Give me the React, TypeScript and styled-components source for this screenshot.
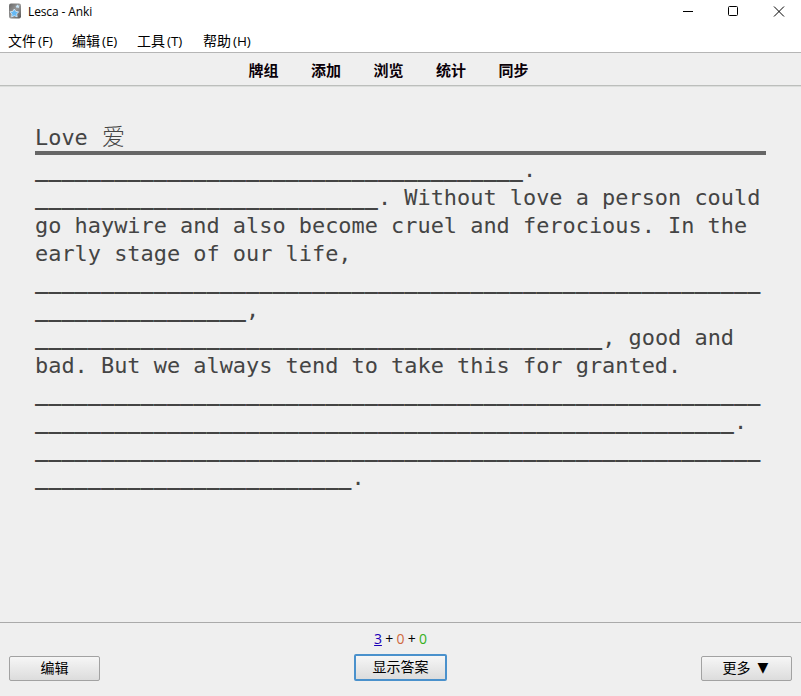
import React from 'react';
import styled, { createGlobalStyle } from 'styled-components';

const GlobalStyle = createGlobalStyle`
  html, body { margin: 0; padding: 0; overflow: hidden; background: #efefef; }
  *, *::before, *::after { box-sizing: border-box; }
`;

const Window = styled.div`
  width: 801px;
  height: 696px;
  display: flex;
  flex-direction: column;
  background: #efefef;
  color: #000;
  font-family: "Open Sans", "Noto Sans CJK SC", sans-serif;
  white-space: nowrap;
`;

const TitleBar = styled.header`
  height: 28px;
  flex: none;
  display: flex;
  background: #fff;
`;

const AppIcon = styled.svg`
  width: 14px;
  height: 16px;
  margin: 3px 0 0 8px;
`;

const Title = styled.span`
  margin-left: 6px;
  font-size: 12px;
  line-height: 24px;
  letter-spacing: -0.12px;
`;

const WindowControls = styled.svg`
  width: 120px;
  height: 22px;
  margin-left: auto;
`;

const MenuBar = styled.nav`
  height: 24px;
  flex: none;
  display: flex;
  padding-left: 8px;
  background: #fff;
`;

const MenuItem = styled.span<{ $width: number }>`
  width: ${(p) => p.$width}px;
  display: flex;
  gap: 2px;
  font-size: 14px;
  line-height: 26px;
`;

const Mnemonic = styled.span`
  font-size: 13.5px;
  letter-spacing: -0.1px;
`;

const Toolbar = styled.nav`
  height: 34px;
  flex: none;
  display: flex;
  justify-content: center;
  gap: 32.5px;
  padding-right: 24px;
  border-top: 1px solid #b5b5b5;
  border-bottom: 1px solid #bcbebc;
  box-shadow: 0 1px #dcdedc;
`;

const ToolbarLink = styled.a`
  color: #0a0008;
  font: bold 15px/33px "Noto Sans CJK SC", sans-serif;
`;

const Card = styled.main`
  flex: 1;
  padding: 37px 35px 0;
  color: #444;
  font-family: "DejaVu Sans Mono", "Noto Sans CJK SC", monospace;
  font-size: 21.92px;
  line-height: 28px;
`;

const CardTitle = styled.div`
  height: 32px;
  border-bottom: 4px solid #666;
  line-height: 30px;
  white-space: pre;
`;

const Glyph = styled.span`
  margin-left: 1px;
  font-family: "Noto Sans CJK SC", sans-serif;
  font-size: 23px;
  font-weight: 300;
  line-height: 1;
`;

const Passage = styled.div`
  margin-top: 1px;
`;

const Line = styled.div`
  height: 28px;
  white-space: pre;
`;

const Blank = styled.span`
  text-shadow: 0 -1px #444;
`;

const BottomBar = styled.footer`
  height: 74px;
  flex: none;
  display: grid;
  grid-template-columns: 91px 93px 91px;
  justify-content: space-between;
  padding: 0 9px;
  border-top: 1px solid #aaa;
`;

const Column = styled.div<{ $top: number }>`
  padding-top: ${(p) => p.$top}px;
`;

const Counts = styled.div`
  height: 31px;
  padding-top: 4px;
  text-align: center;
  font: 14px/24px "Open Sans", sans-serif;
  letter-spacing: -0.2px;
`;

const Count = styled.span<{ $color: string; $active?: boolean }>`
  color: ${(p) => p.$color};
  text-decoration: ${(p) => (p.$active ? 'underline' : 'none')};
`;

const Button = styled.button<{ $primary?: boolean }>`
  width: 100%;
  height: ${(p) => (p.$primary ? 27 : 25)}px;
  display: flex;
  justify-content: center;
  align-items: center;
  gap: 7px;
  padding: 0 0 3px;
  border: ${(p) => (p.$primary ? '2px solid #4a91cc' : '1px solid #a2a2a2')};
  border-radius: 2px;
  background: linear-gradient(#f6f6f6, #dcdcdc);
  color: #000;
  font: 14px/20px "Noto Sans CJK SC", sans-serif;
`;

const Arrow = styled.span`
  margin-right: 2px;
  font: 14px/18px "DejaVu Sans", sans-serif;
`;

const menus = [
  { label: '文件', key: '(F)', width: 64 },
  { label: '编辑', key: '(E)', width: 65 },
  { label: '工具', key: '(T)', width: 66 },
  { label: '帮助', key: '(H)', width: 60 },
];

const links = ['牌组', '添加', '浏览', '统计', '同步'];

const lines: { blanks?: number; text?: string }[] = [
  { blanks: 37, text: '.' },
  { blanks: 26, text: '. Without love a person could' },
  { text: 'go haywire and also become cruel and ferocious. In the' },
  { text: 'early stage of our life,' },
  { blanks: 55 },
  { blanks: 16, text: ',' },
  { blanks: 43, text: ', good and' },
  { text: 'bad. But we always tend to take this for granted.' },
  { blanks: 55 },
  { blanks: 53, text: '.' },
  { blanks: 55 },
  { blanks: 24, text: '.' },
];

export default function App() {
  return (
    <>
      <GlobalStyle />
      <Window>
        <TitleBar>
          <AppIcon viewBox="0 0 14 16">
            <defs>
              <linearGradient id="deck" x1="0" y1="0" x2="1" y2="1">
                <stop offset="0" stopColor="#666" />
                <stop offset=".5" stopColor="#999" />
                <stop offset="1" stopColor="#555" />
              </linearGradient>
            </defs>
            <rect x="1" y="0.5" width="12" height="15" rx="2" fill="url(#deck)" />
            <path d="M6.3 6l1.5 2.4 2.9.4-2 2.2.5 2.9-2.9-1.2-2.7 1.2.4-2.9-2-2.2 2.9-.5z" fill="#65b9f4" stroke="#e6f4ff" strokeWidth=".7" />
            <path d="M9.5 1.5l.7 1.1 1.4.1-.9 1.1.3 1.4-1.4-.6-1.2.7.1-1.4-1-1 1.4-.3z" fill="#c9e7fa" />
          </AppIcon>
          <Title>Lesca - Anki</Title>
          <WindowControls viewBox="0 0 120 22" fill="none" stroke="#000">
            <path d="M2 11.5h10" />
            <rect x="47.5" y="6.5" width="9" height="9" rx="1" />
            <path d="M93 6.5l10 10M103 6.5l-10 10" />
          </WindowControls>
        </TitleBar>
        <MenuBar>
          {menus.map((m) => (
            <MenuItem key={m.key} $width={m.width}>
              {m.label}
              <Mnemonic>{m.key}</Mnemonic>
            </MenuItem>
          ))}
        </MenuBar>
        <Toolbar>
          {links.map((l) => (
            <ToolbarLink key={l}>{l}</ToolbarLink>
          ))}
        </Toolbar>
        <Card>
          <CardTitle>
            Love <Glyph>爱</Glyph>
          </CardTitle>
          <Passage>
            {lines.map(({ blanks, text }, i) => (
              <Line key={i}>
                {blanks && <Blank>{'_'.repeat(blanks)}</Blank>}
                {text}
              </Line>
            ))}
          </Passage>
        </Card>
        <BottomBar>
          <Column $top={33}>
            <Button>编辑</Button>
          </Column>
          <Column $top={0}>
            <Counts>
              <Count $color="#1a00b8" $active>3</Count> + <Count $color="#d06840">0</Count> +{' '}
              <Count $color="#36b020">0</Count>
            </Counts>
            <Button $primary>显示答案</Button>
          </Column>
          <Column $top={33}>
            <Button>
              更多<Arrow>▼</Arrow>
            </Button>
          </Column>
        </BottomBar>
      </Window>
    </>
  );
}
